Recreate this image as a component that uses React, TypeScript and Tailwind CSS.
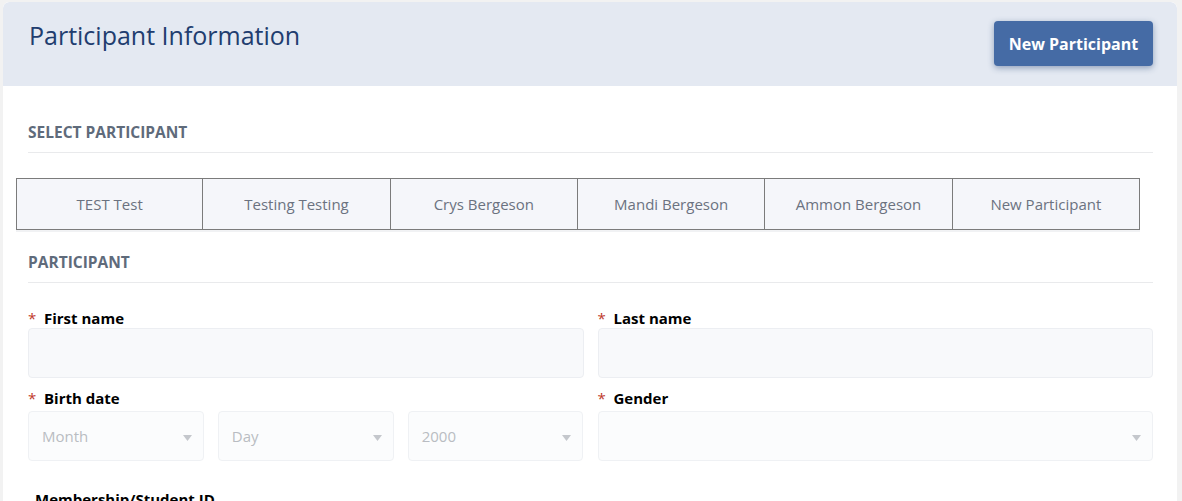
import React from 'react'

const FONT = { fontFamily: '"Open Sans", "Noto Sans", "Liberation Sans", sans-serif' }

const PARTICIPANTS = ['TEST Test', 'Testing Testing', 'Crys Bergeson', 'Mandi Bergeson', 'Ammon Bergeson', 'New Participant']

function Caret() {
    return (
        <svg width="9" height="6" viewBox="0 0 9 6" className="shrink-0">
            <path d="M0 0h9L4.5 6z" fill="#c4c7cc" />
        </svg>
    )
}

function Label({ text, required = true }: { text: string; required?: boolean }) {
    return (
        <div className="flex items-center h-[20px] text-[15px] font-bold text-black leading-5">
            {required && <span className="text-[#c0392b] w-[16px] text-[15px] font-normal">*</span>}
            <span>{text}</span>
        </div>
    )
}

function TextBox() {
    return <div className="h-[50px] rounded-[4px] border border-[#eceef2] bg-[#f8f9fb]" />
}

function SelectBox({ placeholder }: { placeholder?: string }) {
    return (
        <div className="h-[50px] flex-1 rounded-[4px] border border-[#eff1f4] bg-[#fbfcfd] flex items-center justify-between pl-[13px] pr-[11px]">
            <span className="text-[15px] text-[#b9bcc2]">{placeholder}</span>
            <span className="pt-[4px]"><Caret /></span>
        </div>
    )
}

function SectionTitle({ children }: { children: React.ReactNode }) {
    return (
        <div className="border-b border-[#e9eaec] pb-[10px] text-[15.5px] font-bold uppercase leading-5 text-[#5f6b7b]">
            {children}
        </div>
    )
}

export default function App() {
    return (
        <div className="min-h-[501px] bg-[#f2f2f2] pl-[3px] pr-[5px] pt-[2px]" style={FONT}>
            <div className="rounded-t-[6px] bg-white min-h-[499px] overflow-hidden">
                <div className="h-[84px] rounded-t-[6px] bg-[#e4e9f2] flex items-start justify-between pl-[26px] pr-[24px]">
                    <h1 className="pt-[17px] text-[25px] leading-8 text-[#213d6f]">Participant Information</h1>
                    <button className="mt-[19px] h-[45px] w-[159px] rounded-[4px] bg-[#456ba5] text-[16px] font-bold text-white shadow-[0_2px_6px_rgba(40,70,120,0.45)]">
                        New Participant
                    </button>
                </div>

                <div className="pl-[25px] pr-[24px] pt-[36px]">
                    <SectionTitle>Select Participant</SectionTitle>

                    <div className="mt-[25px] -ml-[12px] mr-[13px] grid grid-cols-6 shadow-[0_2px_0_#f1f2f4]">
                        {PARTICIPANTS.map((name, i) => (
                            <div
                                key={name}
                                className={`h-[52px] flex items-center justify-center border border-[#7b7b7b] bg-[#f5f6fa] text-[15px] text-[#6b7280] ${i > 0 ? 'border-l-0' : ''}`}
                            >
                                {name}
                            </div>
                        ))}
                    </div>

                    <div className="mt-[22px]">
                        <SectionTitle>Participant</SectionTitle>
                    </div>

                    <div className="mt-[25px] grid grid-cols-2 gap-x-[14px]">
                        <div>
                            <Label text="First name" />
                            <TextBox />
                        </div>
                        <div>
                            <Label text="Last name" />
                            <TextBox />
                        </div>

                        <div className="mt-[10px]">
                            <Label text="Birth date" />
                            <div className="mt-[3px] flex gap-[14px]">
                                <SelectBox placeholder="Month" />
                                <SelectBox placeholder="Day" />
                                <SelectBox placeholder="2000" />
                            </div>
                        </div>
                        <div className="mt-[10px]">
                            <Label text="Gender" />
                            <div className="mt-[3px] flex">
                                <SelectBox />
                            </div>
                        </div>
                    </div>

                    <div className="mt-[28px] pl-[7px]">
                        <Label text="Membership/Student ID" required={false} />
                    </div>
                </div>
            </div>
        </div>
    )
}
